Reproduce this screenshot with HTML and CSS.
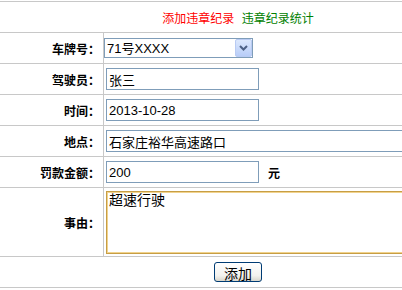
FILE: index.html
```html
<!DOCTYPE html>
<html lang="zh-CN">

<head>
    <meta charset="UTF-8">
    <title>添加违章纪录</title>
    <link rel="stylesheet" href="styles.css">
</head>

<body>
    <table class="form">
        <tr>
            <td colspan="2" class="nav">
                <a href="#" class="add">添加违章纪录</a>
                <a href="#" class="stat">违章纪录统计</a>
            </td>
        </tr>
        <tr>
            <td class="label">车牌号：</td>
            <td class="field">
                <span class="selectwrap">
                    <select class="car">
                        <option>71号XXXX</option>
                    </select>
                    <span class="arrow">
                        <svg width="9" height="6" viewBox="0 0 9 6">
                            <path d="M1 1 L4.5 4.5 L8 1" fill="none" stroke="#4d6185" stroke-width="2"/>
                        </svg>
                    </span>
                </span>
            </td>
        </tr>
        <tr>
            <td class="label">驾驶员：</td>
            <td class="field"><input type="text" value="张三"></td>
        </tr>
        <tr>
            <td class="label">时间：</td>
            <td class="field"><input type="text" value="2013-10-28"></td>
        </tr>
        <tr>
            <td class="label">地点：</td>
            <td class="field"><input type="text" class="wide" value="石家庄裕华高速路口"></td>
        </tr>
        <tr>
            <td class="label">罚款金额：</td>
            <td class="field"><input type="text" value="200"><span class="unit">元</span></td>
        </tr>
        <tr class="tall">
            <td class="label">事由：</td>
            <td class="field"><textarea>超速行驶</textarea></td>
        </tr>
        <tr>
            <td colspan="2" class="submit"><button>添加</button></td>
        </tr>
    </table>
</body>

</html>
```

FILE: styles.css
```css
html {
    overflow: hidden;
}

body {
    margin: 0;
    background: #fff;
    font-family: "Liberation Sans", "Noto Sans CJK SC", sans-serif;
    font-size: 12px;
    color: #000;
}

.form {
    width: 476px;
    margin-top: 1px;
    border-collapse: collapse;
}

.form td {
    height: 30px;
    padding: 0;
    border-top: 1px solid #c8c8c8;
    border-bottom: 1px solid #c8c8c8;
    vertical-align: middle;
}

.nav {
    text-align: center;
}

.nav a {
    text-decoration: none;
    margin: 0 2px;
}

.add {
    color: #ff0000;
}

.stat {
    color: #008000;
}

.label {
    width: 100px;
    padding-right: 3px !important;
    text-align: right;
    font-weight: bold;
    border-right: 1px solid #c8c8c8;
}

.field {
    padding-left: 2px !important;
}

input,
select,
textarea,
button {
    font-family: "Liberation Sans", "Noto Sans CJK SC", sans-serif;
    font-size: 13px;
    color: #000;
}

input {
    box-sizing: border-box;
    width: 153px;
    height: 22px;
    margin: 0;
    padding: 1px 2px;
    border: 1px solid #7f9db9;
    vertical-align: middle;
}

input.wide {
    width: 320px;
}

.unit {
    margin-left: 9px;
    font-weight: bold;
    vertical-align: middle;
}

.selectwrap {
    position: relative;
    display: inline-block;
    margin-left: -2px;
    vertical-align: middle;
}

.car {
    box-sizing: border-box;
    width: 149px;
    height: 20px;
    margin: 0;
    padding: 0 2px;
    border: 1px solid #7f9db9;
    background: #fff;
    appearance: none;
    -webkit-appearance: none;
    display: block;
}

.arrow {
    position: absolute;
    top: 1px;
    right: 1px;
    width: 15px;
    height: 16px;
    border: 1px solid #b9cbf3;
    border-radius: 2px;
    background: linear-gradient(#dce8fd, #b8cdf8);
    display: flex;
    align-items: center;
    justify-content: center;
}

.tall td {
    height: 68px;
}

textarea {
    box-sizing: border-box;
    display: block;
    width: 320px;
    height: 63px;
    margin: 0;
    padding: 0 2px;
    font-size: 14px;
    line-height: 16px;
    border: 1px solid #c79e45;
    box-shadow: inset 0 0 0 1px #f1d38e;
    resize: none;
}

.submit {
    text-align: center;
}

button {
    box-sizing: border-box;
    width: 48px;
    height: 20px;
    padding: 0;
    font-size: 14px;
    border: 1px solid #003c74;
    border-radius: 3px;
    background: linear-gradient(#ffffff, #f3f2ee 70%, #d8d6cc);
}
```
